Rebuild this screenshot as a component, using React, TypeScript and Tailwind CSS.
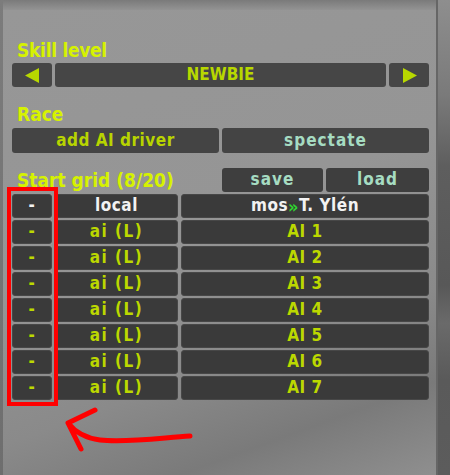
import React from "react";

const font = { fontFamily: '"DejaVu Sans Condensed", "DejaVu Sans", sans-serif' };

const rows = [
  { type: "local", name: null },
  { type: "ai (L)", name: "AI 1" },
  { type: "ai (L)", name: "AI 2" },
  { type: "ai (L)", name: "AI 3" },
  { type: "ai (L)", name: "AI 4" },
  { type: "ai (L)", name: "AI 5" },
  { type: "ai (L)", name: "AI 6" },
  { type: "ai (L)", name: "AI 7" },
];

const Cell = ({ className, children }: { className?: string; children?: React.ReactNode }) => (
  <div
    className={
      "flex h-full items-center justify-center rounded-[3px] border border-[#474747] bg-[#3a3a3a] " +
      (className ?? "")
    }
  >
    {children}
  </div>
);

const App = () => {
  return (
    <div
      className="relative h-[475px] w-[450px] overflow-hidden bg-[#8c8c8c] font-bold [font-stretch:condensed]"
      style={font}
    >
      <div className="flex h-full">
        <div className="w-[3px] bg-gradient-to-b from-[#7c7c7c] to-[#6e6e6e]" />
        <div className="flex w-[433px] flex-col">
          <div className="h-[10px] bg-gradient-to-b from-[#7a7a7a] to-[#939393]" />
          <div className="flex flex-1 flex-col bg-[linear-gradient(160deg,#979797_0%,#959595_45%,#8a8a8a_70%,#7a7a7a_85%,#8f8f8f_100%)] pl-[9px] pr-[7px] pt-[30px]">
            <div className="h-[20px] pl-[5px] text-[19px] leading-[20px] tracking-[-0.3px] text-[#d6f200]">Skill level</div>
            <div className="mt-[3px] flex h-[24px] gap-[3px]">
              <div className="flex w-[40px] items-center justify-center rounded-[3px] bg-[#464646]">
                <svg width="15" height="15" viewBox="0 0 15 15">
                  <polygon points="0,7.5 14,0 14,15" fill="#b8d800" />
                </svg>
              </div>
              <div className="flex flex-1 items-center justify-center rounded-[3px] bg-[#464646] text-[17px] text-[#b8d800]">
                NEWBIE
              </div>
              <div className="flex w-[40px] items-center justify-center rounded-[3px] bg-[#464646]">
                <svg width="15" height="15" viewBox="0 0 15 15">
                  <polygon points="15,7.5 1,0 1,15" fill="#b8d800" />
                </svg>
              </div>
            </div>
            <div className="mt-[17px] h-[20px] pl-[5px] text-[19px] leading-[20px] text-[#d6f200]">Race</div>
            <div className="mt-[4px] flex h-[25px] gap-[3px] text-[17px] tracking-[0.5px]">
              <div className="flex flex-1 items-center justify-center rounded-[3px] bg-[#444444] text-[#b8d400]">
                add AI driver
              </div>
              <div className="flex flex-1 items-center justify-center rounded-[3px] bg-[#444444] text-[#a6dcc2] tracking-[1px]">
                spectate
              </div>
            </div>
            <div className="mt-[15px] flex h-[24px] gap-[3px] text-[17px]">
              <div className="flex flex-1 items-center pl-[5px] text-[19px] text-[#d6f200]">Start grid (8/20)</div>
              <div className="flex w-[101px] items-center justify-center rounded-[3px] bg-[#3e3e3e] tracking-[1px] text-[#a6dcc2]">
                save
              </div>
              <div className="flex w-[103px] items-center justify-center rounded-[3px] bg-[#3e3e3e] tracking-[1px] text-[#a6dcc2]">
                load
              </div>
            </div>
            <div className="mt-[2px] flex flex-col gap-[2px] text-[17px] tracking-[0.5px]">
              {rows.map((r, i) => (
                <div key={i} className="flex h-[24px] gap-[3px]">
                  <div className="w-[40px]">
                    <Cell className={i === 0 ? "text-[#f2f2f2]" : "text-[#bcd800]"}>-</Cell>
                  </div>
                  <div className="w-[123px]">
                    <Cell className={i === 0 ? "text-[#f2f2f2]" : "text-[#bcd800]"}>
                      <span className={i === 0 ? "" : "tracking-[1.5px]"}>{r.type}</span>
                    </Cell>
                  </div>
                  <div className="flex-1">
                    <Cell className={i === 0 ? "text-[#f2f2f2]" : "text-[#bcd800]"}>
                      {r.name ?? (
                        <>
                          mos<span className="text-[18px] text-[#2ed62e]">»</span>T. Ylén
                        </>
                      )}
                    </Cell>
                  </div>
                </div>
              ))}
            </div>
          </div>
        </div>
        <div className="w-[2px] bg-[#666666]" />
        <div className="flex-1 bg-[linear-gradient(180deg,#8e8e8e_0%,#7a7a7a_20%,#5e5e5e_35%,#585858_60%,#6a6a6a_68%,#5a5a5a_80%,#5c5c5c_100%)]" />
      </div>

      <div className="absolute left-[7px] top-[187px] h-[219px] w-[51px] border-4 border-[#ff0000]" />
      <svg className="absolute left-0 top-0" width="450" height="475" viewBox="0 0 450 475">
        <path
          d="M190 436 C160 438 125 443 100 440 C85 438 75 432 68 423 M68 423 L95 410 M68 423 L81 449"
          fill="none"
          stroke="#ff0000"
          strokeWidth="5"
          strokeLinecap="round"
          strokeLinejoin="round"
        />
      </svg>
    </div>
  );
};

export default App;
